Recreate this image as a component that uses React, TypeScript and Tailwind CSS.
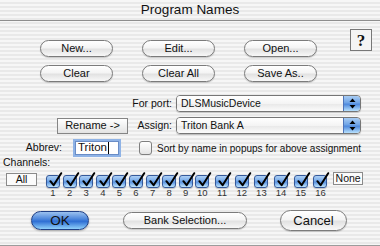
import React from "react";

const pill =
  "flex items-center justify-center rounded-full border border-[#7b7b7b] bg-[image:linear-gradient(to_bottom,#ffffff_0%,#f4f4f4_45%,#e2e2e2_55%,#f8f8f8_100%)] shadow-[0_1px_1px_rgba(0,0,0,0.18)] text-[11px] leading-none text-[#111]";

function Pill({ label, className = "" }: { label: string; className?: string }) {
  return <div className={`${pill} ${className}`}>{label}</div>;
}

function BlueCheck() {
  return (
    <div className="relative h-[13px] w-[14px] rounded-[3px] border border-[#35599a] bg-[image:linear-gradient(to_bottom,#aed0f5_0%,#74a8e8_45%,#5a93e0_55%,#c0e6fd_100%)] shadow-[0_1px_1px_rgba(0,0,0,0.2)]">
      <svg className="absolute left-[1px] top-[-4px]" width="15" height="16" viewBox="0 0 15 16">
        <path d="M2.4 9.2 L5.6 13.2 L13.2 1.2" stroke="#000" strokeWidth="2" fill="none" strokeLinecap="round" strokeLinejoin="round" />
      </svg>
    </div>
  );
}

function Popup({ text }: { text: string }) {
  return (
    <div className="ml-[4px] flex h-[17px] w-[185px] overflow-hidden rounded-[4px] border border-[#767676] shadow-[0_1px_1px_rgba(0,0,0,0.2)]">
      <div className="flex flex-1 items-center bg-[image:linear-gradient(to_bottom,#ffffff_0%,#f4f4f4_50%,#e8e8e8_52%,#fbfbfb_100%)] pl-[4px] text-[10.5px] leading-none">
        {text}
      </div>
      <div className="flex w-[17px] items-center justify-center rounded-r-[3px] border-l border-[#4f74b8] bg-[image:linear-gradient(to_bottom,#a9cdf4_0%,#6ea3e6_45%,#4e89dd_55%,#b8e1fd_100%)]">
        <svg width="7" height="11" viewBox="0 0 7 11">
          <path d="M3.5 0.5 L6.5 4 L0.5 4 Z" fill="#000" />
          <path d="M3.5 10.5 L6.5 7 L0.5 7 Z" fill="#000" />
        </svg>
      </div>
    </div>
  );
}

const channels = Array.from({ length: 16 }, (_, i) => i + 1);

export default function App() {
  return (
    <div className="relative h-[246px] w-[380px] overflow-hidden border-b border-[#9c9c9c] bg-[image:repeating-linear-gradient(to_bottom,#f6f6f6_0px,#f6f6f6_2px,#e9e9e9_2px,#e9e9e9_4px)] font-['Liberation_Sans',Arial,sans-serif] text-[#111]">
      {/* title bar */}
      <div className="flex h-[21px] items-center justify-center border-b border-[#8e8e8e] text-[13.5px]">
        Program Names
      </div>

      {/* top buttons */}
      <div className="flex items-start">
        <div className="ml-[40px] mt-[19px] grid grid-cols-[73px_73px_73px] gap-x-[29px] gap-y-[8px]">
          <Pill label="New..." className="h-[17px]" />
          <Pill label="Edit..." className="h-[17px]" />
          <Pill label="Open..." className="h-[17px]" />
          <Pill label="Clear" className="h-[17px]" />
          <Pill label="Clear All" className="h-[17px]" />
          <Pill label="Save As.." className="h-[17px]" />
        </div>
        <div className="ml-[33px] mt-[8px] flex h-[22px] w-[22px] items-center justify-center border-[1.5px] border-[#777] bg-[#f4f4f4] font-['Liberation_Serif',serif] text-[17px] font-bold leading-none">
          ?
        </div>
      </div>

      {/* port / assign */}
      <div className="mt-[13px] flex flex-col gap-[5px] text-[10.5px]">
        <div className="flex items-center">
          <div className="w-[172px] text-right">For port:</div>
          <Popup text="DLSMusicDevice" />
        </div>
        <div className="flex items-center">
          <div className="ml-[57px] flex h-[16px] w-[71px] items-center justify-center border border-[#858585] bg-[image:linear-gradient(to_bottom,#ffffff_0%,#f1f1f1_50%,#e3e3e3_100%)] text-[11px] leading-none">
            Rename -&gt;
          </div>
          <div className="w-[44px] text-right">Assign:</div>
          <Popup text="Triton Bank A" />
        </div>
      </div>

      {/* abbrev row */}
      <div className="mt-[5px] flex h-[18px] items-center text-[10.5px]">
        <div className="w-[62px] text-right">Abbrev:</div>
        <div className="ml-[11px] flex h-[18px] w-[48px] items-center border-2 border-[#8fb3e6] bg-white pl-[3px] text-[11.5px] leading-none shadow-[inset_0_0_0_1px_#6a8dc6]">
          Triton<span className="ml-[1px] h-[12px] w-px bg-black" />
        </div>
        <div className="ml-[18px] h-[14px] w-[13px] rounded-[3px] border border-[#7f7f7f] bg-[image:linear-gradient(to_bottom,#ffffff_0%,#f2f2f2_50%,#e4e4e4_100%)]" />
        <div className="ml-[5px] text-[10px]">Sort by name in popups for above assignment</div>
      </div>

      {/* channels */}
      <div className="-mt-[1px] h-[13px] pl-[3px] text-[10.5px] leading-[13px]">Channels:</div>
      <div className="mt-[3px] flex items-start">
        <div className="ml-[6px] mt-[1px] flex h-[13px] w-[31px] items-center justify-center border border-[#8a8a8a] bg-[#fbfbfb] text-[10.5px] leading-none">
          All
        </div>
        <div className="ml-[9px] flex">
          {channels.map((n) => (
            <div key={n} className={n < 10 ? "w-[16.6px]" : "w-[19.7px]"}>
              <div className="flex w-[14px] flex-col items-center">
                <div className="mt-[3px]">
                  <BlueCheck />
                </div>
                <div className="h-[10px] whitespace-nowrap text-[9.5px] leading-[10px] text-[#333]">{n}</div>
              </div>
            </div>
          ))}
        </div>
        <div className="flex h-[13px] w-[30px] items-center justify-center border border-[#8a8a8a] bg-[#fbfbfb] text-[10.5px] leading-none">
          None
        </div>
      </div>

      {/* bottom buttons */}
      <div className="mt-[12px] flex h-[21px] items-center">
        <div className="ml-[31px] flex h-[19px] w-[58px] items-center justify-center rounded-full border border-[#1f3f86] bg-[image:linear-gradient(to_bottom,#9cc2ef_0%,#4f88dc_40%,#2f6fd4_55%,#8fd0fb_100%)] text-[13.5px] leading-none shadow-[0_1px_2px_rgba(0,0,0,0.3)]">
          OK
        </div>
        <Pill label="Bank Selection..." className="ml-[34px] h-[17px] w-[124px]" />
        <Pill label="Cancel" className="ml-[33px] h-[21px] w-[67px] text-[13px]" />
      </div>
    </div>
  );
}
